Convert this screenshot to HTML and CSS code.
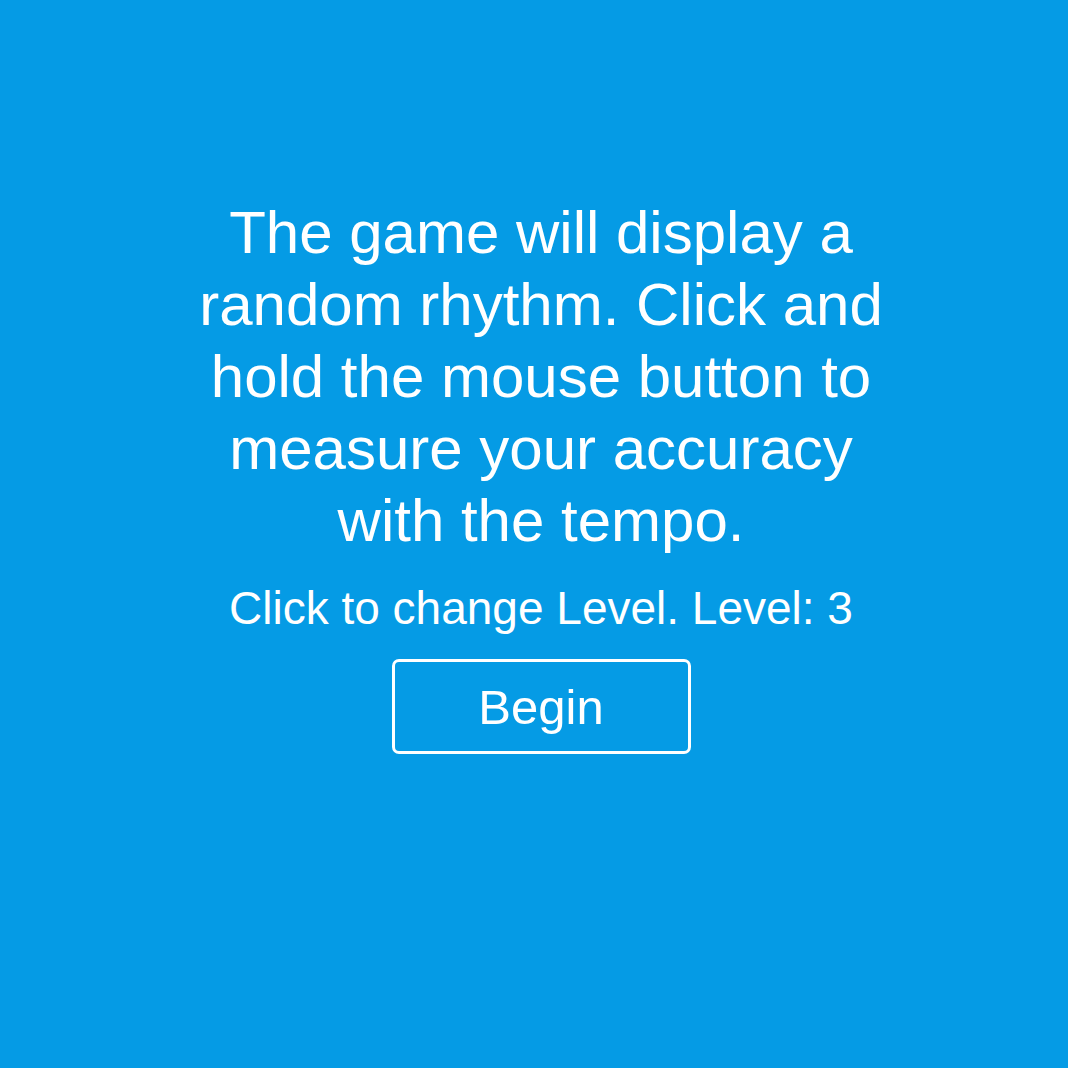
FILE: index.html
```html
<!DOCTYPE html>
<html>
<head>
<meta charset="utf-8">
<link rel="stylesheet" href="styles.css">
</head>
<body>
<main class="screen">
  <p class="intro">The game will display a random rhythm. Click and hold the mouse button to measure your accuracy with the tempo.</p>
  <p class="level">Click to change Level. Level: 3</p>
  <button class="begin">Begin</button>
</main>
</body>
</html>
```
FILE: styles.css
```css
html, body {
  margin: 0;
  padding: 0;
  background: #059be5;
  height: 100%;
}
.screen {
  box-sizing: border-box;
  min-height: 100%;
  display: flex;
  flex-direction: column;
  align-items: center;
  padding: 197px 0 0 14px;
  font-family: "Liberation Sans", Arial, sans-serif;
  color: #fff;
  text-align: center;
}
.intro {
  margin: 0;
  width: 700px;
  font-size: 60px;
  line-height: 72px;
}
.level {
  margin: 24px 0 0;
  font-size: 46px;
  line-height: 55px;
}
.begin {
  margin-top: 23px;
  width: 299px;
  height: 95px;
  box-sizing: border-box;
  border: 3px solid #fff;
  border-radius: 7px;
  background: transparent;
  color: #fff;
  font-family: "Liberation Sans", Arial, sans-serif;
  font-size: 49px;
  padding: 0;
}
```
